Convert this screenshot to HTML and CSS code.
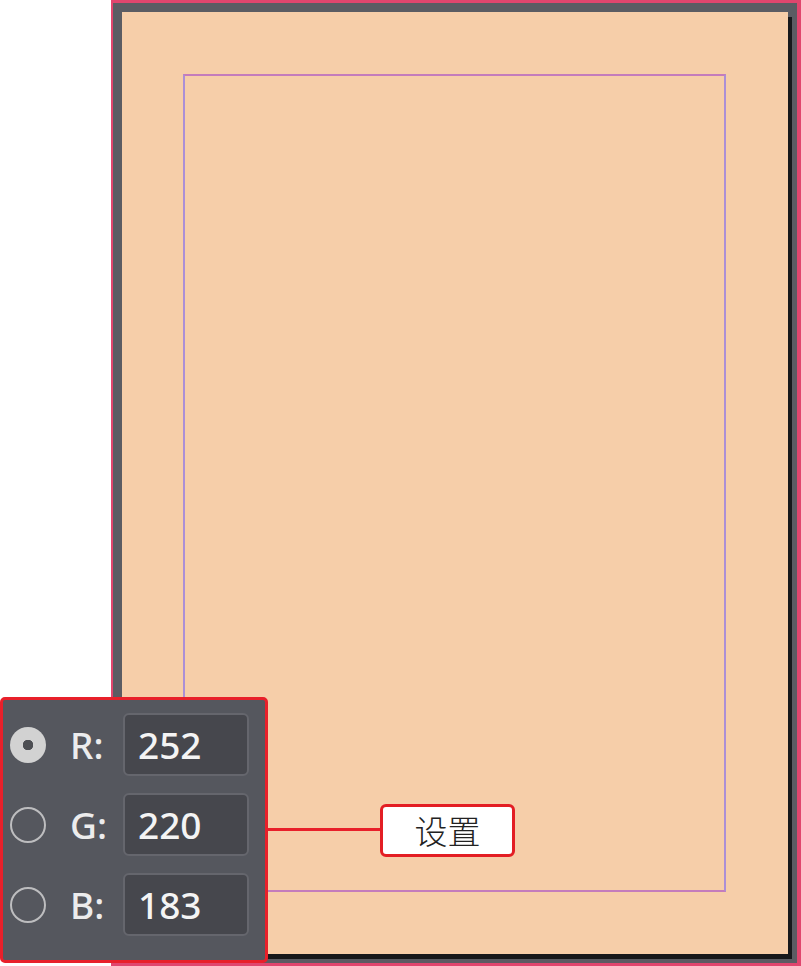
FILE: index.html
```html
<!DOCTYPE html>
<html lang="zh">
<head>
<meta charset="utf-8">
<title>设置</title>
<link rel="stylesheet" href="styles.css">
</head>
<body>
<div class="frame">
  <div class="page">
    <div class="guide"></div>
  </div>
</div>

<div class="panel">
  <div class="row">
    <span class="radio radio-on"></span>
    <span class="label">R:</span>
    <span class="field">252</span>
  </div>
  <div class="row">
    <span class="radio"></span>
    <span class="label">G:</span>
    <span class="field">220</span>
  </div>
  <div class="row">
    <span class="radio"></span>
    <span class="label">B:</span>
    <span class="field">183</span>
  </div>
</div>

<div class="leader"></div>
<div class="callout">设置</div>
</body>
</html>
```

FILE: styles.css
```css
html, body {
  margin: 0;
  padding: 0;
  background: #ffffff;
}

body {
  width: 801px;
  height: 966px;
  overflow: hidden;
  position: relative;
  font-family: "Noto Sans", "Open Sans", sans-serif;
}

.frame {
  margin-left: 111px;
  width: 690px;
  height: 966px;
  box-sizing: border-box;
  border-style: solid;
  border-color: #e0466e;
  border-width: 3px 4px 3px 2px;
  background: #5b5c63;
  padding: 9px 9px 9px 9px;
}

.page {
  width: 666px;
  height: 942px;
  box-sizing: border-box;
  background: #f6cea9;
  box-shadow: 4px 5px 0 #17181b;
  padding: 62px 62px 62px 61px;
}

.guide {
  height: 100%;
  box-sizing: border-box;
  border-style: solid;
  border-width: 2px;
  border-color: #c47cbc #ab8fd6 #c47cbc #ab8fd6;
}

.panel {
  position: absolute;
  left: 0;
  top: 697px;
  width: 268px;
  height: 266px;
  box-sizing: border-box;
  border: 3px solid #e8202a;
  border-radius: 5px;
  background: #55575e;
  padding: 13px 0 0 7px;
  display: flex;
  flex-direction: column;
  gap: 17px;
}

.row {
  display: flex;
  align-items: center;
  height: 63px;
}

.radio {
  width: 36px;
  height: 36px;
  box-sizing: border-box;
  border-radius: 50%;
  border: 2.5px solid #bdbdbf;
  margin-right: 24px;
  flex: none;
}

.radio-on {
  border: none;
  background: radial-gradient(circle at center, #4d4e53 0 5px, #d2d2d2 5.5px);
}

.label {
  width: 53px;
  color: #ececed;
  font-size: 37px;
  font-weight: 500;
  line-height: 1;
  flex: none;
}

.field {
  width: 126px;
  height: 63px;
  box-sizing: border-box;
  border: 2px solid #65666d;
  border-radius: 6px;
  background: #46474d;
  color: #f4f4f4;
  font-size: 37px;
  font-weight: 500;
  line-height: 59px;
  padding-left: 13px;
  flex: none;
}

.leader {
  position: absolute;
  left: 268px;
  top: 828px;
  width: 113px;
  height: 3px;
  background: #e8202a;
}

.callout {
  position: absolute;
  left: 380px;
  top: 804px;
  width: 135px;
  height: 53px;
  box-sizing: border-box;
  border: 3px solid #e31e24;
  border-radius: 6px;
  background: #ffffff;
  color: #222222;
  font-family: "Noto Sans CJK SC", sans-serif;
  font-size: 33px;
  font-weight: 300;
  line-height: 47px;
  text-align: center;
}
```
